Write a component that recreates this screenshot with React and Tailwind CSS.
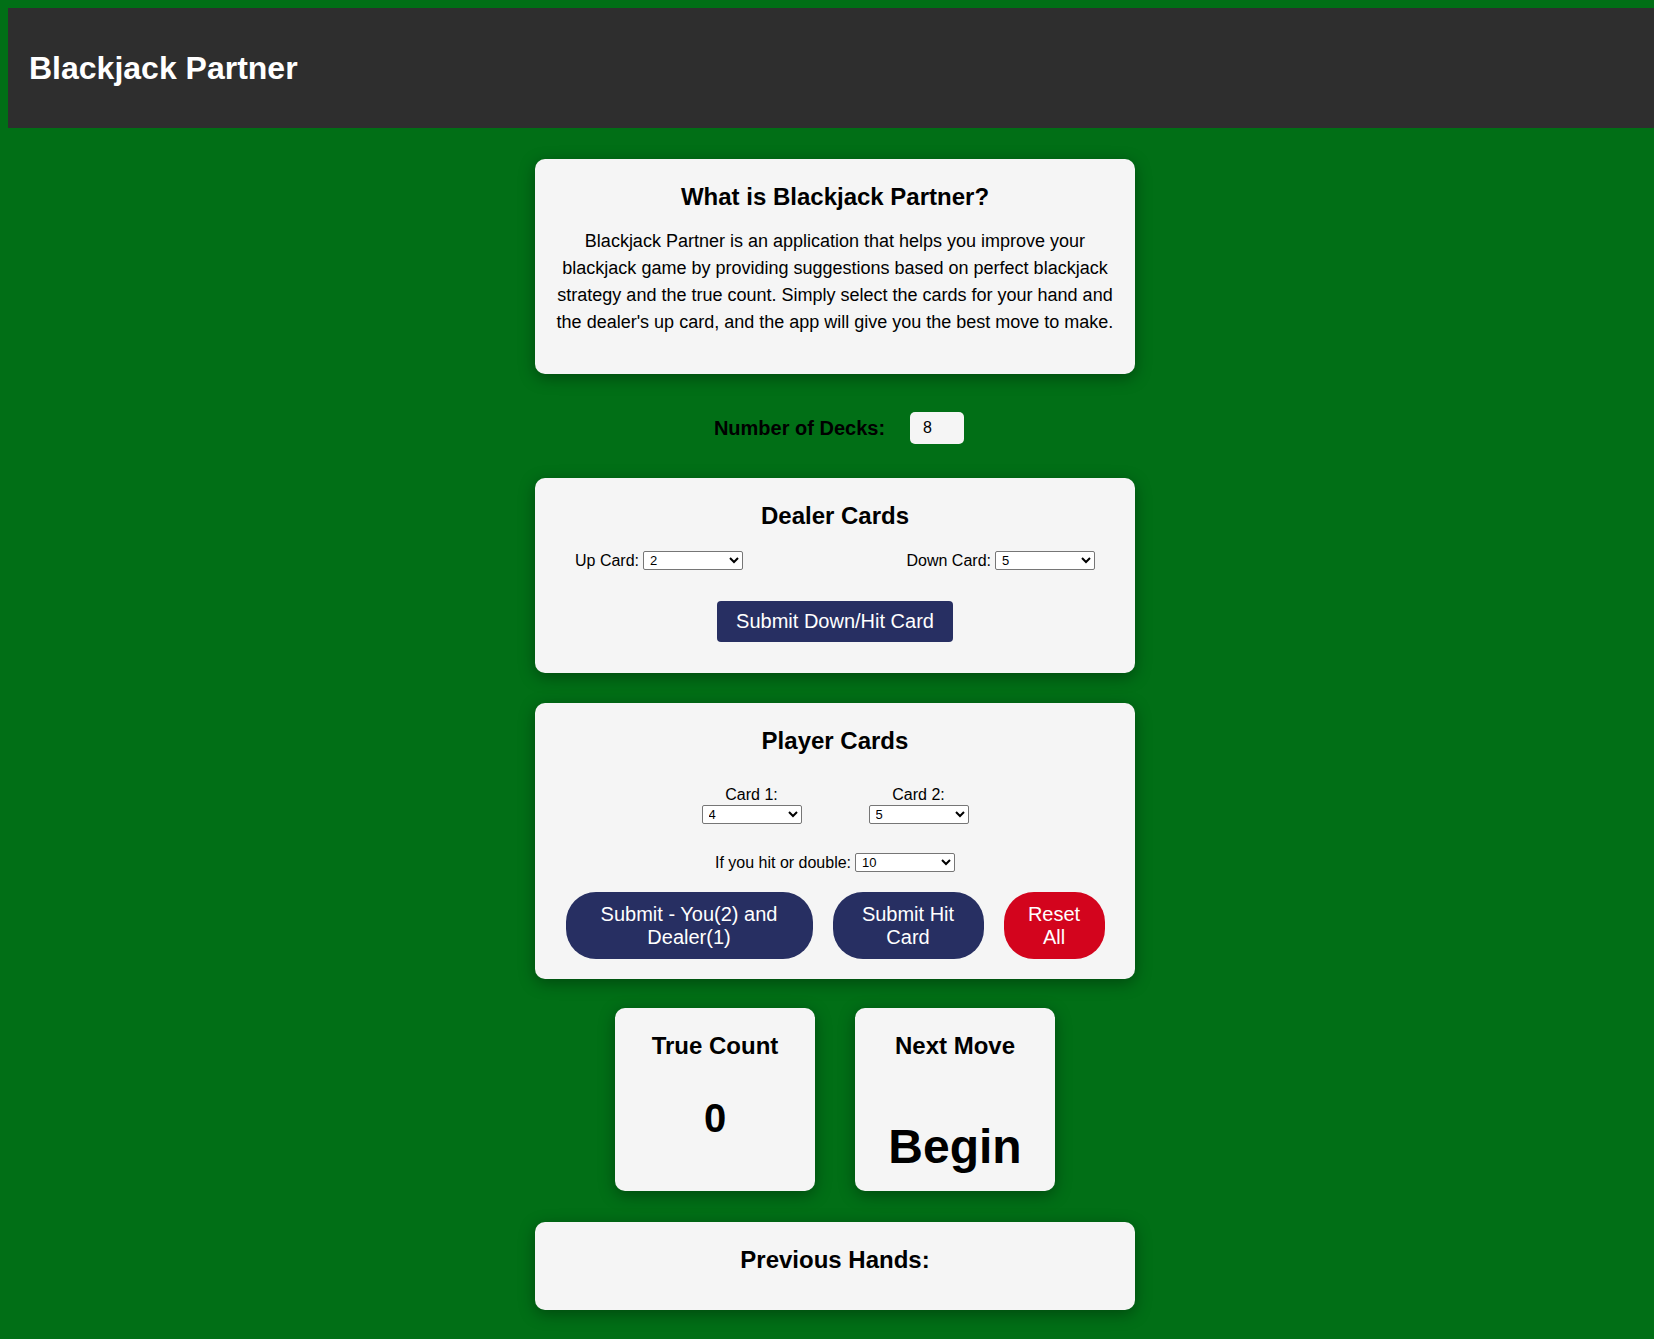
import { useState } from 'react';

const cards = ['A', '2', '3', '4', '5', '6', '7', '8', '9', '10', 'J', 'Q', 'K'];

function CardSelect({ value, onChange }) {
  return (
    <select
      value={value}
      onChange={(e) => onChange(e.target.value)}
      className="block w-[100px] h-[19px] text-[13px] leading-[15px] bg-white text-black border border-[#767676] rounded-[2px] pl-[2px]"
    >
      {cards.map((c) => (
        <option key={c} value={c}>
          {c}
        </option>
      ))}
    </select>
  );
}

function Panel({ className = '', children }) {
  return (
    <div
      className={`w-[600px] rounded-[10px] bg-[#f5f5f5] px-5 shadow-[0_4px_16px_rgba(0,0,0,0.35)] ${className}`}
    >
      {children}
    </div>
  );
}

function Title({ children }) {
  return <h2 className="text-[24px] leading-[36px] font-bold text-center">{children}</h2>;
}

export default function App() {
  const [upCard, setUpCard] = useState('2');
  const [downCard, setDownCard] = useState('5');
  const [card1, setCard1] = useState('4');
  const [card2, setCard2] = useState('5');
  const [hitCard, setHitCard] = useState('10');

  return (
    <div className="min-h-screen bg-[#016f16] pt-2 pl-2 pb-[30px] text-black font-['Liberation_Sans',Arial,sans-serif]">
      {/* Header */}
      <header className="w-full h-[120px] bg-[#2e2e2e] flex items-center pl-[21px]">
        <h1 className="text-[32px] leading-[37px] font-bold text-white">Blackjack Partner</h1>
      </header>

      <main className="pl-4 pr-2 flex flex-col items-center">
        {/* Intro */}
        <Panel className="mt-[31px] pt-5 pb-5">
          <Title>What is Blackjack Partner?</Title>
          <p className="mt-[13px] mb-[18px] text-[18px] leading-[27px] text-center">
            Blackjack Partner is an application that helps you improve your blackjack game by
            providing suggestions based on perfect blackjack strategy and the true count. Simply
            select the cards for your hand and the dealer's up card, and the app will give you the
            best move to make.
          </p>
        </Panel>

        {/* Decks */}
        <div className="mt-[38px] pl-[8px] flex items-center gap-[25px]">
          <label className="text-[20px] leading-[23px] font-bold">Number of Decks:</label>
          <input
            type="text"
            defaultValue="8"
            className="w-[54px] h-[32px] rounded-[5px] bg-[#f5f5f5] pl-[13px] text-[16px] outline-none"
          />
        </div>

        {/* Dealer */}
        <Panel className="mt-[34px] pt-5 pb-[31px]">
          <Title>Dealer Cards</Title>
          <div className="mt-[17px] px-5 flex justify-between items-center text-[16px] leading-[18px]">
            <div className="flex items-center gap-[4px]">
              <span>Up Card:</span>
              <CardSelect value={upCard} onChange={setUpCard} />
            </div>
            <div className="flex items-center gap-[4px]">
              <span>Down Card:</span>
              <CardSelect value={downCard} onChange={setDownCard} />
            </div>
          </div>
          <div className="mt-[31px] flex justify-center">
            <button className="h-[41px] px-[19px] rounded-[4px] bg-[#272f62] text-white text-[20px] leading-[23px]">
              Submit Down/Hit Card
            </button>
          </div>
        </Panel>

        {/* Player */}
        <Panel className="mt-[30px] pt-5 pb-5">
          <Title>Player Cards</Title>
          <div className="mt-[27px] flex justify-center gap-[67px] text-[16px] leading-[18px]">
            <div className="flex flex-col items-center gap-[1px]">
              <span>Card 1:</span>
              <CardSelect value={card1} onChange={setCard1} />
            </div>
            <div className="flex flex-col items-center gap-[1px]">
              <span>Card 2:</span>
              <CardSelect value={card2} onChange={setCard2} />
            </div>
          </div>
          <div className="mt-[29px] flex justify-center items-center gap-[4px] text-[16px] leading-[18px]">
            <span>If you hit or double:</span>
            <CardSelect value={hitCard} onChange={setHitCard} />
          </div>
          <div className="mt-5 flex justify-center gap-5 text-white text-[20px] leading-[23px]">
            <button className="w-[247px] h-[67px] px-5 rounded-[30px] bg-[#272f62]">
              Submit - You(2) and Dealer(1)
            </button>
            <button className="w-[151px] h-[67px] px-5 rounded-[30px] bg-[#272f62]">
              Submit Hit Card
            </button>
            <button className="w-[101px] h-[67px] px-5 rounded-[30px] bg-[#d3041d]">
              Reset All
            </button>
          </div>
        </Panel>

        {/* Results */}
        <div className="mt-[29px] flex gap-[40px]">
          <div className="w-[200px] h-[183px] rounded-[10px] bg-[#f5f5f5] pt-5 shadow-[0_4px_16px_rgba(0,0,0,0.35)] text-center">
            <Title>True Count</Title>
            <div className="mt-[31px] text-[40px] leading-[46px] font-bold">0</div>
          </div>
          <div className="w-[200px] h-[183px] rounded-[10px] bg-[#f5f5f5] pt-5 shadow-[0_4px_16px_rgba(0,0,0,0.35)] text-center">
            <Title>Next Move</Title>
            <div className="mt-[55px] text-[48px] leading-[55px] font-bold">Begin</div>
          </div>
        </div>

        {/* History */}
        <Panel className="mt-[31px] pt-5 pb-[32px]">
          <Title>Previous Hands:</Title>
        </Panel>
      </main>
    </div>
  );
}
